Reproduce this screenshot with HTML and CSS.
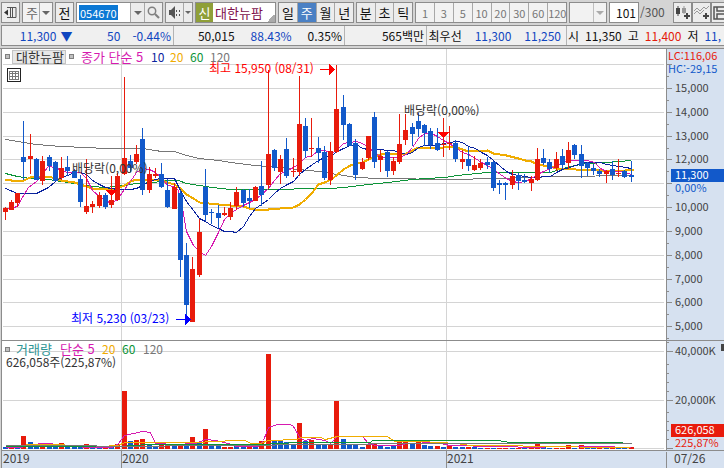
FILE: index.html
```
<!DOCTYPE html>
<html lang="ko">
<head>
<meta charset="utf-8">
<title>대한뉴팜 주봉 차트</title>
<link rel="stylesheet" href="styles.css">
</head>
<body>
<header class="toolbar">
  <button class="btn" aria-label="창 설정"><svg width="13" height="13" viewBox="0 0 13 13" fill="none" stroke="#555"><path d="M3 1.500h9v10H3M8.500 1.500v10M6.500 1.500v10"/><path d="M0 6.500l4-3v6z" fill="#333" stroke="none"/></svg></button>
  <label class="pick pick-period"><select aria-label="주기"><option>주</option></select></label>
  <button class="btn">전</button>
  <div class="group group-code">
    <input class="code" aria-label="종목코드" value="054670">
    <button class="cell drop" aria-label="종목 목록"></button>
    <button class="cell" aria-label="검색"><svg width="13" height="13" viewBox="0 0 13 13" fill="none" stroke="#808080" stroke-width="1.500"><circle cx="5" cy="5" r="3.700"/><path d="M8 8l4 4" stroke-width="2.200"/></svg></button>
  </div>
  <div class="group group-sound">
    <button class="cell" aria-label="소리"><svg width="12" height="13" viewBox="0 0 12 13" fill="#555"><path d="M0 4h2l4-4v13L2 9H0zM7 4h1v2H7zM7 8h1v2H7zM10 4h1v2h-1zM10 8h1v2h-1z"/></svg></button>
    <button class="cell drop slim" aria-label="소리 설정"></button>
  </div>
  <div class="group stock"><span class="badge">신</span><span class="name">대한뉴팜</span></div>
  <div class="group group-period">
    <button class="cell">일</button><button class="cell on">주</button><button class="cell">월</button><button class="cell">년</button>
  </div>
  <div class="group group-minute">
    <button class="cell">분</button><button class="cell">초</button><button class="cell">틱</button>
  </div>
  <div class="group group-steps">
    <button class="cell">1</button><button class="cell">3</button><button class="cell">5</button><button class="cell">10</button><button class="cell">20</button><button class="cell">30</button><button class="cell">60</button><button class="cell">120</button>
  </div>
  <label class="pick pick-unit"><select aria-label="단위" disabled><option></option></select></label>
  <label class="count"><input aria-label="봉 개수" value="101"><span>/300</span></label>
  <div class="tools">
    <button class="btn" aria-label="봉 추가"><svg width="15" height="15" viewBox="0 0 15 15" fill="#444"><path d="M1 3h4v6H1zM2.500 1h1v10h-1z"/><path d="M7 3h4v5H7zM8.500 1h1v8h-1z" fill="#999"/><path d="M11 8h2v2h2v2h-2v2h-2v-2H9v-2h2z"/></svg></button>
    <button class="btn" aria-label="지표 추가"><svg width="15" height="15" viewBox="0 0 15 15" fill="none" stroke="#999"><path d="M0 6l3-3 3 3 4-4 2 2 3-3M0 9l3-3 3 3 4-4"/><path d="M11 8h2v2h2v2h-2v2h-2v-2H9v-2h2z" fill="#444" stroke="none"/></svg></button>
    <button class="btn" aria-label="저장"><svg width="15" height="14" viewBox="0 0 15 14" fill="none" stroke="#555" stroke-width="1.500"><path d="M1 1h13v12H1zM4 1v4h8M4 13V8h8v5"/></svg></button>
  </div>
</header>
<section class="quote" aria-label="시세">
  <div class="part part-price blue"><span>11,300</span><span class="down">▼</span><span class="diff">50</span><span>-0.44%</span></div>
  <div class="part part-volume"><span>50,015</span><span class="blue">88.43%</span><span>0.35%</span></div>
  <div class="part part-amount"><span>565백만</span></div>
  <div class="part part-best"><span>최우선</span><span class="blue">11,300</span><span class="blue">11,250</span></div>
  <div class="part part-day"><span>시</span><span>11,350</span><span>고</span><span class="red">11,400</span><span>저</span><span class="blue">11,</span></div>
</section>
<main>
<svg class="chart" viewBox="0 48 724 420" role="img" aria-label="주가 및 거래량 차트">
  <rect class="plot" x="2" y="49" width="664" height="401"/>
  <rect class="axis-bg" x="667" y="49" width="57" height="419"/>
  <rect class="axis-bg" x="2" y="451" width="722" height="17"/>
  <g id="grid"></g>
  <g id="volume"></g>
  <g id="volume-lines"></g>
  <g id="price-lines"></g>
  <g id="candles"></g>
  <path class="frame" d="M0 48h724v1H0zM1 48h1v420H1zM2 340h722v1H2zM2 450h722v1H2zM666 48h1v402h-1zM666 452h1v16h-1zM121 451h1v17h-1zM446 451h1v17h-1z"/>
  <g id="ticks"></g>

  <rect class="marker" x="5.500" y="54.500" width="4" height="4"/>
  <rect class="tag" x="12.500" y="50.500" width="53" height="13"/>
  <text class="title" x="16" y="62">대한뉴팜</text>
  <rect class="marker" x="69.500" y="54.500" width="4" height="4"/>
  <text y="62"><tspan class="c5 title" x="81">종가 단순 5</tspan><tspan class="c10" x="151">10</tspan><tspan class="c20" x="170">20</tspan><tspan class="c60" x="190">60</tspan><tspan class="c120" x="210">120</tspan></text>
  <g class="sheet"><rect x="7.500" y="68.500" width="13" height="13"/><path d="M9.500 71.500h9v8h-9zM9.500 73.500h9M9.500 76.500h9M12.500 71.500v8M15.500 71.500v8"/></g>

  <g class="high"><text x="209" y="73">최고 15,950 (08/31)</text><path d="M320 69h9v-5l6 5.500-6 5.500v-5h-9z"/></g>
  <g class="low"><text x="71" y="323">최저 5,230 (03/23)</text><path d="M176 319h9v-5l6 5.500-6 5.500v-5h-9z"/></g>
  <text x="72" y="173">배당락(0,00%)</text>
  <text x="404" y="115">배당락(0,00%)</text>
  <path class="drop-mark" d="M105 190h13l-6.500 6zM437 132h13l-6.500 6z"/>

  <rect class="marker" x="5.500" y="347.500" width="4" height="4"/>
  <text y="354"><tspan class="cvol title" x="16">거래량</tspan><tspan class="c5 title" x="60">단순 5</tspan><tspan class="c20" x="102">20</tspan><tspan class="c60" x="122">60</tspan><tspan class="c120" x="143">120</tspan></text>
  <text x="6" y="367">626,058주(225,87%)</text>

  <text class="scale up" x="668" y="60">LC:116,06</text>
  <text class="scale dn" x="668" y="73">HC:-29,15</text>
  <rect class="now" x="671" y="169" width="53" height="13"/>
  <text class="scale inv" x="675" y="179">11,300</text>
  <text class="scale dn" x="675" y="192">0,00%</text>
  <text class="scale" x="675" y="355">40,000K</text>
  <text class="scale" x="675" y="404">20,000K</text>
  <rect class="now-vol" x="671" y="424" width="53" height="13"/>
  <text class="scale inv" x="675" y="434">626,058</text>
  <text class="scale up" x="675" y="447">225,87%</text>
  <path class="corner" d="M721 344h3v7h-3z"/>
  <text class="date" y="463"><tspan x="3">2019</tspan><tspan x="122">2020</tspan><tspan x="447">2021</tspan><tspan x="674">07/26</tspan></text>
</svg>
</main>
<script src="chart.js"></script>
</body>
</html>
```
FILE: styles.css
```
* { box-sizing: border-box; }

body {
  margin: 0;
  background: #d4d4d4;
  color: #111;
  font: 13px/16px "Noto Sans CJK KR", sans-serif;
  overflow: hidden;
}

button, input, select {
  margin: 0;
  padding: 0;
  border: 0;
  border-radius: 0;
  font: inherit;
  color: inherit;
  background: none;
}

.toolbar {
  display: flex;
  gap: 2px;
  height: 24px;
  padding: 2px 0 1px 1px;
}

.toolbar > * { flex: none; }

.btn, .group, .pick, .count input {
  border: 1px solid #8c8c8c;
  background: #ececec;
}

.btn {
  display: grid;
  place-items: center;
  width: 19px;
}

.group { display: flex; }
.group-code { width: 87px; }
.group-sound { width: 28px; }
.group-period { width: 76px; }
.group-minute { width: 57px; }
.group-steps { width: 152px; color: #777; font-size: 11px; background: #f2f2f2; }

.cell {
  display: grid;
  flex: 1;
  place-items: center;
  min-width: 0;
}

.cell + .cell, .code + .cell { border-left: 1px solid #a8a8a8; }

.on { background: #4a80c4; color: #fff; }

.drop { flex: none; width: 14px; }
.slim { width: 9px; }

.drop::after, .pick::after {
  content: "";
  border: 4px solid transparent;
  border-top-color: #666;
  border-bottom: 0;
}

.slim::after { border-width: 3px 3px 0; }

.pick {
  display: flex;
  align-items: center;
  padding-right: 2px;
  background: #f2f2f2;
}

.pick select {
  flex: 1;
  min-width: 0;
  height: 100%;
  margin-right: 2px;
  padding-left: 3px;
  border-right: 1px solid #a8a8a8;
  appearance: none;
  color: #666;
}

.pick-period { width: 31px; }
.pick-unit { width: 38px; }
.pick-unit::after { border-top-color: #aaa; }

.code {
  width: 53px;
  border: 2px solid #fff;
  border-right-width: 12px;
  padding-left: 1px;
  font-size: 11px;
  background: #0c78d4;
  color: #fff;
}

.stock { width: 81px; background: #fff; }
.badge { width: 17px; text-align: center; line-height: 19px; background: #8f9f38; color: #fff; }
.name {
  flex: 1;
  padding-left: 2px;
  line-height: 19px;
  color: #80104c;
  background: linear-gradient(135deg, transparent 50%, #aaa 50%) right bottom / 8px 8px no-repeat;
}

.count { display: flex; width: 62px; line-height: 20px; color: #555; font-size: 12px; }
.count input { width: 30px; padding-right: 2px; text-align: right; background: #fff; color: #111; }
.count span { padding-left: 1px; }

.tools { display: flex; }

.quote {
  display: flex;
  height: 21px;
  margin: 1px 0 2px 1px;
  border: 1px solid #8c8c8c;
  border-right: 0;
  background: #f0f0f0;
  font-size: 12px;
  line-height: 19px;
  white-space: nowrap;
}

.part {
  display: flex;
  flex: none;
  justify-content: flex-end;
  padding-right: 2px;
  border-right: 1px solid #b4b4b4;
}

.part-price { width: 172px; gap: 12px; }
.down { margin-left: -8px; }
.diff { width: 36px; text-align: right; }
.part-volume { width: 171px; gap: 16px; }
.part-amount { width: 82px; }
.part-best { width: 140px; gap: 13px; padding-right: 5px; }
.part-day { flex: 1; justify-content: flex-start; gap: 6px; padding: 0 0 0 1px; border: 0; }

.blue { color: #1046c0; }
.red { color: #e41b0c; }

.chart {
  display: block;
  width: 100%;
  height: auto;
  shape-rendering: crispEdges;
}

.chart text { fill: #333; font-size: 12px; }
.chart .title { font-size: 13px; }
.chart .scale { fill: #444; font-size: 11px; }
.chart .date { fill: #444; }
.plot { fill: #fff; }
.axis-bg { fill: #d6e1f0; }
.frame, .tick { fill: #8c8c8c; }
.grid { fill: #d4d4d4; }
.marker { fill: #c0c0c0; stroke: #808080; }
.tag { fill: #e8e8e8; stroke: #c4c4c4; }
.sheet { fill: #fff; stroke: #222; }
.sheet path { fill: none; stroke: #777; }

.rise { fill: #e81b0c; }
.fall { fill: #1259ca; }

.line { fill: none; stroke-width: 1; }
.m5 { stroke: #d61ab0; }
.m10 { stroke: #0a239e; }
.m20 { stroke: #f0ac00; }
.m60 { stroke: #0c9438; }
.m120 { stroke: #777; }
.thick { stroke-width: 2; }

.chart .c5 { fill: #d61ab0; }
.chart .c10 { fill: #0a239e; }
.chart .c20 { fill: #f0ac00; }
.chart .c60 { fill: #0c9438; }
.chart .c120 { fill: #777; }
.chart .cvol { fill: #2d9494; }
.chart .up { fill: #e81b0c; }
.chart .dn { fill: #1259ca; }
.chart .inv { fill: #fff; }
.high, .chart .high text, .drop-mark { fill: #f00; }
.low, .chart .low text { fill: #00f; }
.now { fill: #1259ca; }
.now-vol { fill: #e81b0c; }
.corner { fill: #444; }
```
FILE: chart.js
```
// Each candle: wick top, wick bottom, body top, body bottom, R (rise) or B (fall)
const candles = `207 220 208 212 R|200 210 202 210 R|193 207 193 203 R|121 180 157 162 B|134 174 156 159 R|158 180 159 180 B
156 185 161 181 R|155 171 157 166 B|161 181 162 181 B|157 180 168 178 R|156 176 167 171 B|169 178 171 178 B
175 207 179 202 B|159 214 206 212 R|201 213 204 207 R|192 208 195 206 R|193 209 195 207 B|176 208 200 205 R
173 201 176 200 R|77 175 158 174 R|155 172 161 168 B|145 164 154 162 R|128 195 139 190 B|167 193 174 190 R
168 178 174 176 R|163 188 174 187 B|179 208 190 207 B|183 209 187 209 R|190 277 193 260 B|243 315 255 305 B
257 322 269 322 R|219 277 232 275 R|169 221 187 215 B|209 224 212 213 B|205 228 213 218 B|207 216 213 215 R
202 220 208 217 R|187 210 192 206 R|189 207 190 203 B|189 208 198 201 B|186 201 187 201 R|161 206 186 195 B
70 189 154 185 R|149 171 150 168 B|155 184 159 172 R|138 178 149 176 B|158 177 171 172 R|76 176 124 172 R
118 158 126 151 B|118 157 148 149 R|137 163 148 153 B|146 180 152 178 B|142 185 151 180 R|65 153 109 152 R
95 140 107 125 B|123 146 124 146 B|139 180 143 175 B|158 170 162 169 R|136 160 136 158 R|112 168 117 162 B
150 172 156 160 R|151 177 152 171 B|157 175 161 171 R|114 164 144 162 R|114 145 130 140 R|123 146 127 134 B
113 137 121 129 B|124 146 125 133 B|128 149 131 145 B|128 151 143 150 B|118 157 144 145 R|126 150 143 144 R
140 162 143 159 B|150 169 159 162 R|147 171 159 166 B|156 171 165 170 R|159 170 163 168 R|157 169 162 165 B
161 191 162 188 B|180 194 183 185 B|182 200 183 185 B|170 189 176 185 R|173 190 175 181 B|174 183 180 182 B
176 191 179 183 R|148 181 159 180 R|149 165 158 163 B|159 173 162 169 B|152 171 159 168 R|149 169 156 165 B
142 169 150 163 R|144 159 145 155 B|145 178 154 166 B|162 176 163 168 B|164 175 168 171 B|169 177 171 174 B
170 183 171 174 R|161 180 169 175 B|159 177 173 174 R|170 178 171 177 B|161 182 175 177 B`.split(/[|\n]/);

const volumes = `2B 2R 2B 13R 7B 3B 3R 4B 3B 6R 3B 3B 3B 5R 3B 2B 3R 2B 5R 58R 8B 9R 10R 4B 2B 4R 3R 3B 4R 3B
12R 7B 20R 3B 4B 2R 2R 3B 2B 2R 3B 8R 95R 8B 8B 7B 5B 26R 8B 9R 4B 4B 4R 48R 10B 5B 4B 2B 4R 5R
3B 2B 3B 9R 8R 5B 9R 4B 3B 3R 2B 4R 2B 2B 2R 2B 1B 1R 1B 1R 1R 1B 1R 1B 1R 5R 2B 1B 1R 1R
4R 1B 4R 1B 1B 1R 1B 3R 1B 1B 2R`.split(/\s+/);

const priceLines = [
  ["m120", "5,139 23,142 36,144 61,146 86,147 105,148 142,148 155,150 161,151 174,151 186,155 199,158 218,160 230,162 255,165 268,166 299,169 318,171 337,174 355,177 380,178 450,179 495,178 525,177 560,176 631,175"],
  ["m60", "5,173 17,176 30,178 48,179 61,181 80,184 92,186 105,187 124,185 136,183 155,182 161,180 178,180 186,183 199,185 212,187 230,189 287,189 300,188 330,188 343,187 368,184 387,182 412,179 425,178 445,177 456,175 487,172 550,172 562,168 575,165 587,163 606,162 618,161 631,160"],
  ["m20 thick", "5,179 11,180 23,180 30,177 36,176 48,176 55,178 61,180 74,182 80,184 86,186 92,188 117,188 124,185 130,181 136,179 149,179 161,180 167,182 174,184 180,188 186,194 193,198 199,202 218,204 243,206 249,208 261,210 268,209 280,208 293,207 299,204 305,199 312,192 318,184 324,182 331,179 337,174 343,169 350,165 356,163 362,162 368,159 374,156 381,154 406,153 412,150 418,147 443,147 449,146 456,147 462,149 468,151 487,150 493,153 506,155 518,158 525,160 531,161 537,164 543,165 550,166 556,168 575,169 600,170 625,170 634,169"],
  ["m10", "5,188 17,193 36,193 48,187 55,181 61,177 67,175 74,172 80,172 86,174 92,180 99,184 105,187 117,189 130,189 136,188 142,185 149,181 155,179 161,178 174,178 180,190 186,201 193,210 199,218 205,221 211,225 218,228 224,231 230,231 236,232 243,226 249,216 255,208 261,204 268,199 274,193 280,188 287,184 293,181 299,174 305,169 312,164 318,160 324,157 331,155 337,151 343,148 350,145 356,144 362,148 368,149 374,149 393,150 399,152 406,154 412,152 418,147 424,145 437,145 443,143 449,142 456,141 462,142 468,146 475,148 481,152 487,155 493,160 500,166 506,171 512,174 518,175 531,177 550,176 556,172 562,169 569,167 575,165 581,163 587,162 600,162 606,164 619,166 631,168"],
  ["m5", "5,209 17,206 22,197 28,187 36,181 42,173 48,166 55,167 61,170 67,172 80,172 86,178 92,190 99,196 105,200 111,203 117,199 124,189 130,181 136,172 142,168 149,169 155,172 161,177 167,185 174,186 178,190 183,213 186,231 193,245 199,251 205,255 211,246 218,232 224,219 230,213 236,209 243,205 249,202 255,199 261,194 268,188 274,180 280,173 287,170 293,167 299,163 305,157 312,155 318,150 324,150 331,153 337,149 343,143 349,142 356,141 362,143 368,147 374,152 381,157 399,157 406,154 412,147 418,138 424,133 431,133 437,136 443,140 449,143 456,148 462,152 468,154 475,158 481,162 487,165 493,169 500,174 506,178 512,181 518,182 525,181 531,178 537,174 543,171 550,168 556,166 562,162 569,160 587,160 594,162 600,168 606,171 619,171 625,172 631,174"]
];

const volumeLines = [
  ["m5", "5,447 20,447 25,446 40,443 50,443 62,446 100,447 112,447 118,443 124,435 133,433 142,431 150,432 155,443 175,444 195,443 205,439 215,440 228,443 236,446 258,446 263,440 268,427 277,424 290,424 293,426 300,438 305,440 312,438 325,440 330,443 337,436 362,436 368,443 375,445 400,445 406,443 437,442 449,445 540,447 550,446 597,446 631,447"],
  ["m20", "25,444 52,444 100,446 117,445 125,442 195,442 235,440 245,440 250,443 260,443 268,440 297,439 300,437 320,437 325,439 337,436 387,436 394,441 420,441 456,443 470,445 520,445 525,446 630,447"],
  ["m60", "5,446 120,446 147,444 260,444 297,442 370,442 372,440 497,440 510,442 622,442"],
  ["m120", "5,445 95,445 97,446 150,446 180,445 260,445 290,444 450,443 631,443"]
];

const fill = (id, markup) => { document.getElementById(id).innerHTML = markup; };
const rect = (cls, x, y, w, h) => `<rect class="${cls}" x="${x}" y="${y}" width="${w}" height="${h}"/>`;
const tone = (c) => (c === "R" ? "rise" : "fall");
const slot = (i) => 5 + Math.floor(i * 6.26 + 0.2);
const lines = (list) => list.map(([cls, pts]) => `<polyline class="line ${cls}" transform="translate(.5 .5)" points="${pts}"/>`).join("");

const prices = [64, 88, 112, 136, 159, 183, 207, 231, 255, 279, 302, 326];

fill("grid", [...prices, 351, 400, 448].map((y) => rect("grid", 3, y, 661, 1)).join("")
  + [121, 446].map((x) => rect("grid", x, 49, 1, 401)).join(""));

fill("candles", candles.map((row, i) => {
  const [hi, lo, top, end, c] = row.split(" ");
  const x = slot(i);
  return rect(tone(c), x, hi, 1, lo - hi) + rect(tone(c), x - 2, top, 5, end - top);
}).join(""));

fill("volume", volumes.map((v, i) => {
  const h = parseInt(v, 10);
  return rect(tone(v.slice(-1)), slot(i) - 2, 449 - h, 5, h);
}).join(""));

fill("price-lines", lines(priceLines));
fill("volume-lines", lines(volumeLines));

fill("ticks", prices.map((y, i) => {
  const label = 16000 - i * 1000;
  const text = label < 16000 && label !== 11000
    ? `<text class="scale" x="675" y="${y + 4}">${label.toLocaleString("en-US")}</text>` : "";
  return rect("tick", 667, y, 5, 1) + rect("tick", 667, y + 12, 2, 1) + text;
}).join("")
  + [351, 400, 448].map((y) => rect("tick", 667, y, 6, 1)).join("")
  + [342, 364, 373, 382, 391, 412, 421, 430, 439].map((y) => rect("tick", 667, y, 2, 1)).join(""));
```
